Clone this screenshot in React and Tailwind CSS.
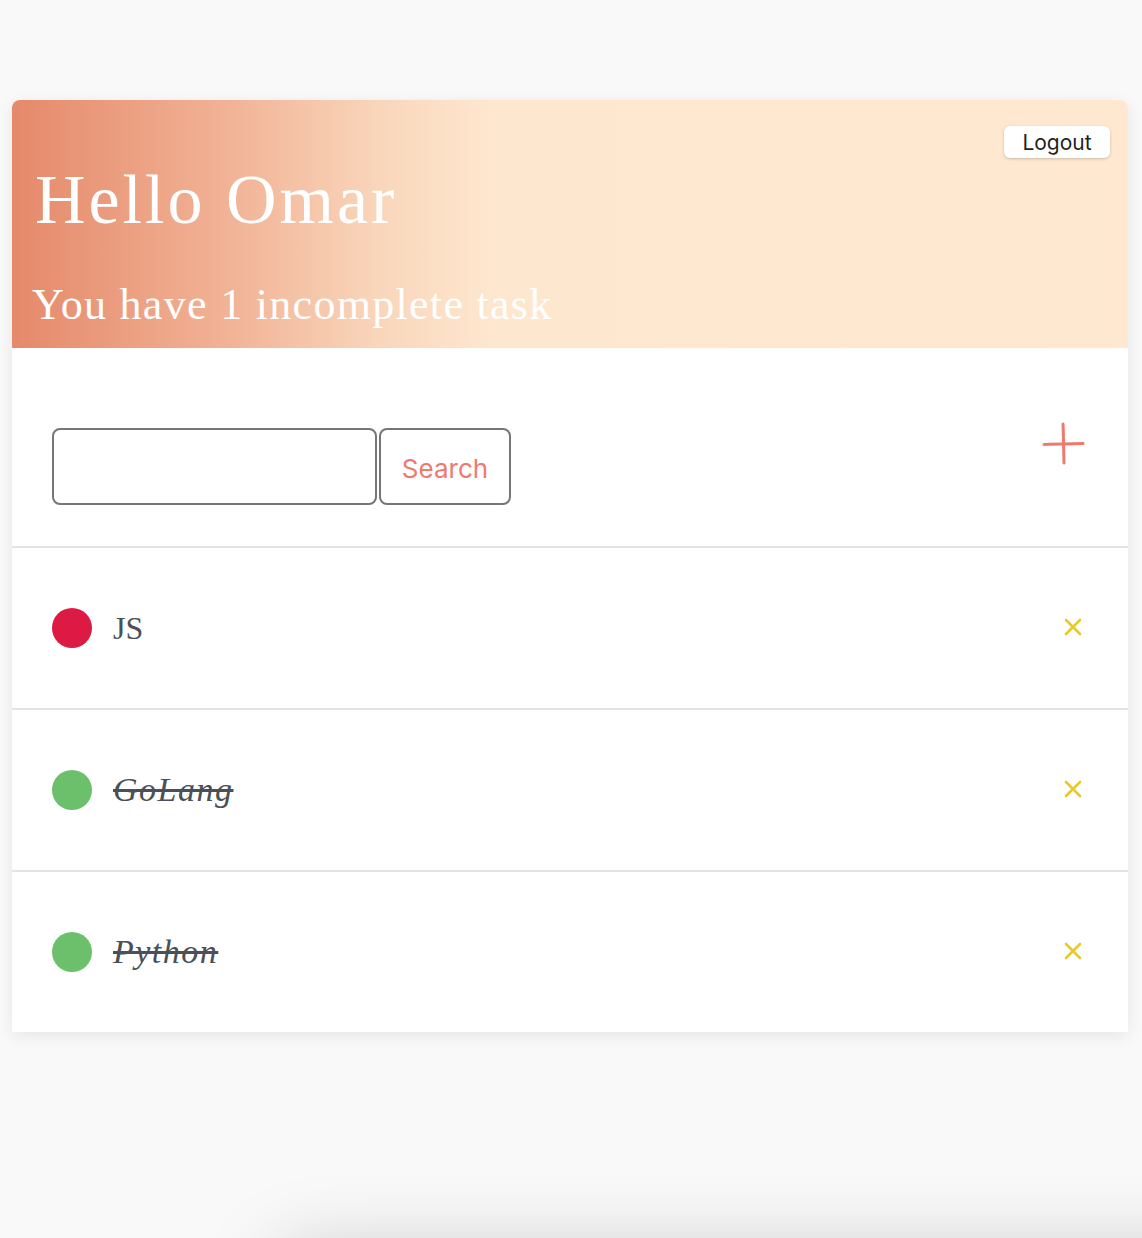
import React from "react";

const serif = { fontFamily: '"Liberation Serif", "DejaVu Serif", serif' };

function Plus() {
  return (
    <svg width="44" height="44" viewBox="0 0 44 44" className="mt-[-6px] mr-[-3px]">
      <path d="M21 2 C21.6 14 21.6 28 22 41" stroke="#ee7a6e" strokeWidth="3" strokeLinecap="round" fill="none" />
      <path d="M2 22.5 C14 21.8 30 21.8 41 21.6" stroke="#ee7a6e" strokeWidth="3" strokeLinecap="round" fill="none" />
    </svg>
  );
}

function Cross() {
  return (
    <svg width="20" height="20" viewBox="0 0 20 20" className="mt-[-2px]">
      <path d="M3 3 L17 17 M17 3 L3 17" stroke="#e8c92a" strokeWidth="2.6" strokeLinecap="round" />
    </svg>
  );
}

function Row({ color, text, done }) {
  return (
    <div className="flex items-center justify-between h-[162px] border-t-2 border-[#e3e3e3] pl-[40px] pr-[45px]">
      <div className="flex items-center gap-[21px]">
        <div className={`w-[40px] h-[40px] rounded-full ${color}`} />
        <span
          className={`leading-none text-[#4a5058] ${done ? "italic line-through text-[34px] tracking-[1.5px]" : "text-[32px]"}`}
          style={serif}
        >
          {text}
        </span>
      </div>
      <Cross />
    </div>
  );
}

export default function App() {
  return (
    <div className="min-h-[1238px] bg-[#f9f9f9] pt-[100px] px-[12px] overflow-hidden">
      <div className="w-[1116px] bg-white rounded-t-[8px] shadow-[0_4px_18px_rgba(0,0,0,0.08)]">
        <div className="flex justify-between rounded-t-[8px] bg-[linear-gradient(to_right,#e5896a_0%,#f2b497_20%,#f9d6bb_33%,#fee7cf_43%,#ffe8cf_100%)] pl-[23px] pr-[18px] h-[248px]">
          <div className="pt-[65px] text-white" style={serif}>
            <h1 className="text-[70px] leading-none font-normal tracking-[3px]">Hello Omar</h1>
            <p className="mt-[48px] text-[44px] leading-none tracking-[1.3px] ml-[-3px]">You have 1 incomplete task</p>
          </div>
          <div className="pt-[26px]">
            <button
              className="w-[106px] h-[32px] bg-white rounded-[6px] text-[21px] text-[#1f1f1f] shadow-[0_1px_3px_rgba(0,0,0,0.2)] leading-none"
              style={{ fontFamily: 'Inter, "Liberation Sans", sans-serif' }}
            >
              Logout
            </button>
          </div>
        </div>
        <div className="flex justify-between items-start pt-[80px] pb-[41px] pl-[40px] pr-[45px]">
          <div className="flex gap-[2px]">
            <input className="w-[325px] h-[77px] border-2 border-[#767676] rounded-[8px] outline-none" />
            <button
              className="w-[132px] h-[77px] border-2 border-[#767676] rounded-[8px] text-[26px] text-[#ee7a6e] pt-[3px]"
              style={{ fontFamily: 'Inter, "Liberation Sans", sans-serif' }}
            >
              Search
            </button>
          </div>
          <Plus />
        </div>
        <Row color="bg-[#dc1a44]" text="JS" />
        <Row color="bg-[#6cc06c]" text="GoLang" done />
        <Row color="bg-[#6cc06c]" text="Python" done />
      </div>
      <div className="mt-[222px] ml-[270px] w-[1000px] h-[100px] bg-[#f9f9f9] shadow-[0_0_80px_rgba(0,0,0,0.22)]" />
    </div>
  );
}
